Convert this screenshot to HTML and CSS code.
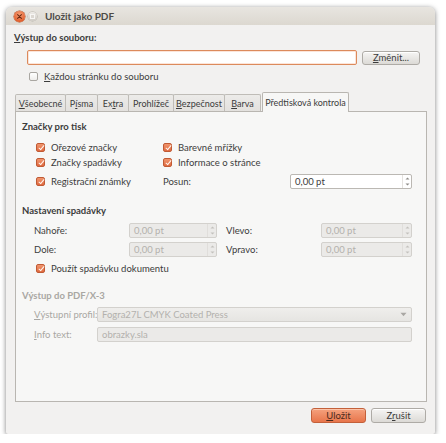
FILE: index.html
```html
<!DOCTYPE html>
<html lang="cs">
<head>
<meta charset="utf-8">
<title>Uložit jako PDF</title>
<link rel="stylesheet" href="styles.css">
</head>
<body>
<div class="window">
  <div class="titlebar">
    <span class="tb-close"><svg width="11" height="11" viewBox="0 0 11 11"><path d="M3.6 3.6 L7.4 7.4 M7.4 3.6 L3.6 7.4" stroke="#6b2a12" stroke-width="1.1" stroke-linecap="round"/></svg></span>
    <span class="tb-min"><span class="tb-min-inner"></span></span>
    <span class="title">Uložit jako PDF</span>
  </div>
  <div class="body">
    <div class="section-head"><u>V</u>ýstup do souboru:</div>
    <div class="file-row">
      <div class="entry focused"></div>
      <button class="btn"><u>Z</u>měnit...</button>
    </div>
    <div class="check-row top-check">
      <span class="check"></span><span><u>K</u>aždou stránku do souboru</span>
    </div>

    <div class="tabs">
      <div class="tab w1"><u>V</u>šeobecné</div>
      <div class="tab w2">P<u>í</u>sma</div>
      <div class="tab w3">Ex<u>t</u>ra</div>
      <div class="tab w4">Prohlížeč</div>
      <div class="tab w5"><u>B</u>ezpečnost</div>
      <div class="tab w6"><u>B</u>arva</div>
      <div class="tab active">Předtisková kontrola</div>
    </div>

    <div class="panel">
      <div class="group-head">Značky pro tisk</div>
      <div class="marks">
        <div class="check-row"><span class="check on"></span><span>Ořezové značky</span></div>
        <div class="check-row"><span class="check on"></span><span>Barevné mřížky</span></div>
        <div></div>
        <div class="check-row"><span class="check on"></span><span>Značky spadávky</span></div>
        <div class="check-row"><span class="check on"></span><span>Informace o stránce</span></div>
        <div></div>
        <div class="check-row r3"><span class="check on"></span><span>Registrační známky</span></div>
        <div class="lbl r3">Posun:</div>
        <div class="spin r3"><span class="val">0,00 pt</span><span class="arrows"><svg width="5" height="11" viewBox="0 0 5 11"><path d="M0.5 3.5 L2.5 1.5 L4.5 3.5Z M0.5 7.5 L2.5 9.5 L4.5 7.5Z" fill="#8d8b87"/></svg></span></div>
      </div>

      <div class="group-head g2">Nastavení spadávky</div>
      <div class="bleed">
        <div class="lbl">Nahoře:</div>
        <div class="spin dis"><span class="val">0,00 pt</span><span class="arrows"><svg width="5" height="11" viewBox="0 0 5 11"><path d="M0.5 3.5 L2.5 1.5 L4.5 3.5Z M0.5 7.5 L2.5 9.5 L4.5 7.5Z" fill="#c3c1bd"/></svg></span></div>
        <div class="lbl pad">Vlevo:</div>
        <div class="spin dis"><span class="val">0,00 pt</span><span class="arrows"><svg width="5" height="11" viewBox="0 0 5 11"><path d="M0.5 3.5 L2.5 1.5 L4.5 3.5Z M0.5 7.5 L2.5 9.5 L4.5 7.5Z" fill="#c3c1bd"/></svg></span></div>
        <div class="lbl">Dole:</div>
        <div class="spin dis"><span class="val">0,00 pt</span><span class="arrows"><svg width="5" height="11" viewBox="0 0 5 11"><path d="M0.5 3.5 L2.5 1.5 L4.5 3.5Z M0.5 7.5 L2.5 9.5 L4.5 7.5Z" fill="#c3c1bd"/></svg></span></div>
        <div class="lbl pad">Vpravo:</div>
        <div class="spin dis"><span class="val">0,00 pt</span><span class="arrows"><svg width="5" height="11" viewBox="0 0 5 11"><path d="M0.5 3.5 L2.5 1.5 L4.5 3.5Z M0.5 7.5 L2.5 9.5 L4.5 7.5Z" fill="#c3c1bd"/></svg></span></div>
      </div>
      <div class="check-row doc-bleed"><span class="check on"></span><span>Použít spadávku dokumentu</span></div>

      <div class="group-head g3 dim">Výstup do PDF/X-3</div>
      <div class="pdfx">
        <div class="lbl dim"><u>V</u>ýstupní profil:</div>
        <div class="combo dis"><span class="val">Fogra27L CMYK Coated Press</span><svg width="7" height="5" viewBox="0 0 7 5"><path d="M0.5 0.8 L6.5 0.8 L3.5 4.2Z" fill="#a9a7a3"/></svg></div>
        <div class="lbl dim"><u>I</u>nfo text:</div>
        <div class="entry dis"><span class="val">obrazky.sla</span></div>
      </div>
    </div>

    <div class="actions">
      <button class="btn primary"><u>U</u>ložit</button>
      <button class="btn">Z<u>r</u>ušit</button>
    </div>
  </div>
</div>
</body>
</html>
```

FILE: styles.css
```css
html, body {
  margin: 0;
  padding: 0;
  background: #ffffff;
}
body {
  font-family: Lato, "Open Sans", sans-serif;
  font-size: 9.5px;
  color: #3c3c3c;
}
u {
  text-decoration: underline;
  text-underline-offset: 1px;
}

.window {
  margin: 7px 0 0 6px;
  width: 429px;
  height: 427px;
  border-radius: 6px 6px 2px 2px;
  box-shadow: 0 1px 5px rgba(0, 0, 0, 0.5);
  background: #f2f1f0;
  display: flex;
  flex-direction: column;
  overflow: hidden;
}

.titlebar {
  height: 18px;
  flex: none;
  background: linear-gradient(#e8e5e0, #dcd8d0);
  display: flex;
  align-items: center;
}
.tb-close {
  width: 11px;
  height: 11px;
  margin-left: 8px;
  border-radius: 50%;
  background: radial-gradient(circle at 50% 35%, #f7a27a, #e2602f 70%, #c9511f);
  box-shadow: 0 0 0 0.5px #b24a1e;
  display: flex;
}
.tb-min {
  width: 9px;
  height: 9px;
  margin-left: 3px;
  border-radius: 50%;
  background: linear-gradient(#eeece8, #cfcbc4);
  box-shadow: 0 0 0 0.5px #b5b1aa;
  display: flex;
  align-items: center;
  justify-content: center;
}
.tb-min-inner {
  width: 3px;
  height: 3px;
  border: 1px solid #f7f6f4;
  background: #dcd8d2;
}
.title {
  margin-left: 8px;
  font-weight: bold;
  font-size: 10px;
  color: #4c4a46;
}

.body {
  flex: 1;
  display: flex;
  flex-direction: column;
  padding: 7px 0 0 8px;
}
.section-head {
  height: 12px;
  line-height: 12px;
  font-weight: bold;
}
.file-row {
  margin-top: 6px;
  margin-left: 13px;
  display: flex;
  align-items: center;
  height: 15px;
}
.entry {
  box-sizing: border-box;
  height: 15px;
  border: 1px solid #c0bdb8;
  border-radius: 2px;
  background: #ffffff;
  display: flex;
  align-items: center;
  padding-left: 4px;
}
.entry.focused {
  width: 330px;
  border-color: #dc8a5c;
  box-shadow: inset 0 0 0 1px rgba(245, 180, 145, 0.35);
}
.btn {
  box-sizing: border-box;
  height: 14px;
  width: 58px;
  margin-left: 5px;
  padding: 0;
  font: inherit;
  color: #3c3c3c;
  border: 1px solid #aeaba6;
  border-radius: 3px;
  background: linear-gradient(#f6f5f4, #dcdad6);
  box-shadow: inset 0 1px 0 #ffffff;
  line-height: 12px;
}

.check-row {
  display: flex;
  align-items: center;
  height: 15px;
  gap: 6px;
  white-space: nowrap;
}
.top-check {
  margin-top: 4px;
  margin-left: 15px;
}
.check {
  box-sizing: border-box;
  width: 9px;
  height: 9px;
  flex: none;
  border: 1px solid #a9a6a1;
  border-radius: 2px;
  background: linear-gradient(#ffffff, #efeeec);
  position: relative;
}
.check.on {
  border-color: #c05a34;
  background: linear-gradient(#f0956d, #e06a40);
}
.check.on::after {
  content: "";
  position: absolute;
  left: 2.5px;
  top: 0px;
  width: 2px;
  height: 5px;
  border: solid #fff6f0;
  border-width: 0 1.5px 1.5px 0;
  transform: rotate(40deg);
}

.tabs {
  margin-top: 8px;
  margin-left: 1px;
  height: 19px;
  display: flex;
  align-items: flex-end;
  font-size: 9px;
}
.tab {
  box-sizing: border-box;
  height: 17px;
  margin-right: -1px;
  border: 1px solid #bfbcb7;
  border-bottom: none;
  border-radius: 2px 2px 0 0;
  background: linear-gradient(#ecebe9, #e3e1de);
  display: flex;
  align-items: center;
  justify-content: center;
  white-space: nowrap;
}
.w1 { width: 51px; }
.w2 { width: 33px; }
.w3 { width: 32px; }
.w4 { width: 46px; }
.w5 { width: 52px; }
.w6 { width: 37px; }
.tab.active {
  width: 87px;
  height: 20px;
  margin-left: 2px;
  background: #f7f7f6;
  border-color: #b9b6b1;
  margin-bottom: -1px;
  z-index: 1;
  padding-bottom: 1px;
}

.panel {
  box-sizing: border-box;
  margin-left: 1px;
  width: 412px;
  height: 291px;
  border: 1px solid #b9b6b1;
  background: #f7f7f6;
  padding: 9px 0 0 6px;
  display: flex;
  flex-direction: column;
}
.group-head {
  height: 12px;
  line-height: 12px;
  font-weight: bold;
}
.dim {
  color: #a9a7a3;
}
.marks {
  margin-top: 7px;
  margin-left: 14px;
  display: grid;
  grid-template-columns: 127px 127px 122px;
  grid-template-rows: 15px 15px 19px;
}
.marks .r3 {
  align-self: end;
}
.lbl {
  display: flex;
  align-items: center;
  height: 15px;
  white-space: nowrap;
}
.lbl.pad {
  padding-left: 9px;
}
.spin {
  box-sizing: border-box;
  height: 15px;
  border: 1px solid #bbb8b3;
  border-radius: 2px;
  background: #ffffff;
  display: flex;
  align-items: center;
  justify-content: space-between;
  padding-left: 4px;
}
.spin .arrows {
  width: 8px;
  height: 13px;
  border-left: 1px solid #e4e2df;
  display: flex;
  align-items: center;
  justify-content: center;
}
.dis {
  background: #ebeae8;
  border-color: #d3d1cd;
  color: #b3b1ad;
}
.dis .arrows {
  border-left-color: #e0dedb;
}

.g2 {
  margin-top: 16px;
}
.bleed {
  margin-top: 6px;
  margin-left: 12px;
  display: grid;
  grid-template-columns: 95px 88px 104px 91px;
  grid-template-rows: 15px 15px;
  row-gap: 4px;
}
.doc-bleed {
  margin-top: 4px;
  margin-left: 14px;
}
.g3 {
  margin-top: 14px;
}
.pdfx {
  margin-top: 5px;
  margin-left: 12px;
  display: grid;
  grid-template-columns: 63px 315px;
  grid-template-rows: 15px 15px;
  row-gap: 5px;
}
.combo {
  box-sizing: border-box;
  height: 15px;
  border: 1px solid #d3d1cd;
  border-radius: 2px;
  display: flex;
  align-items: center;
  justify-content: space-between;
  padding: 0 4px 0 4px;
  background: linear-gradient(#efeeec, #e6e5e2);
}

.actions {
  margin-top: 6px;
  width: 412px;
  display: flex;
  justify-content: flex-end;
}
.btn.primary {
  width: 55px;
  height: 15px;
  border-color: #c3603a;
  background: linear-gradient(#f5a27e, #e8754b);
  box-shadow: inset 0 1px 0 rgba(255, 220, 200, 0.6);
  color: #4a2a1c;
}
.actions .btn {
  width: 55px;
  height: 15px;
}
```
